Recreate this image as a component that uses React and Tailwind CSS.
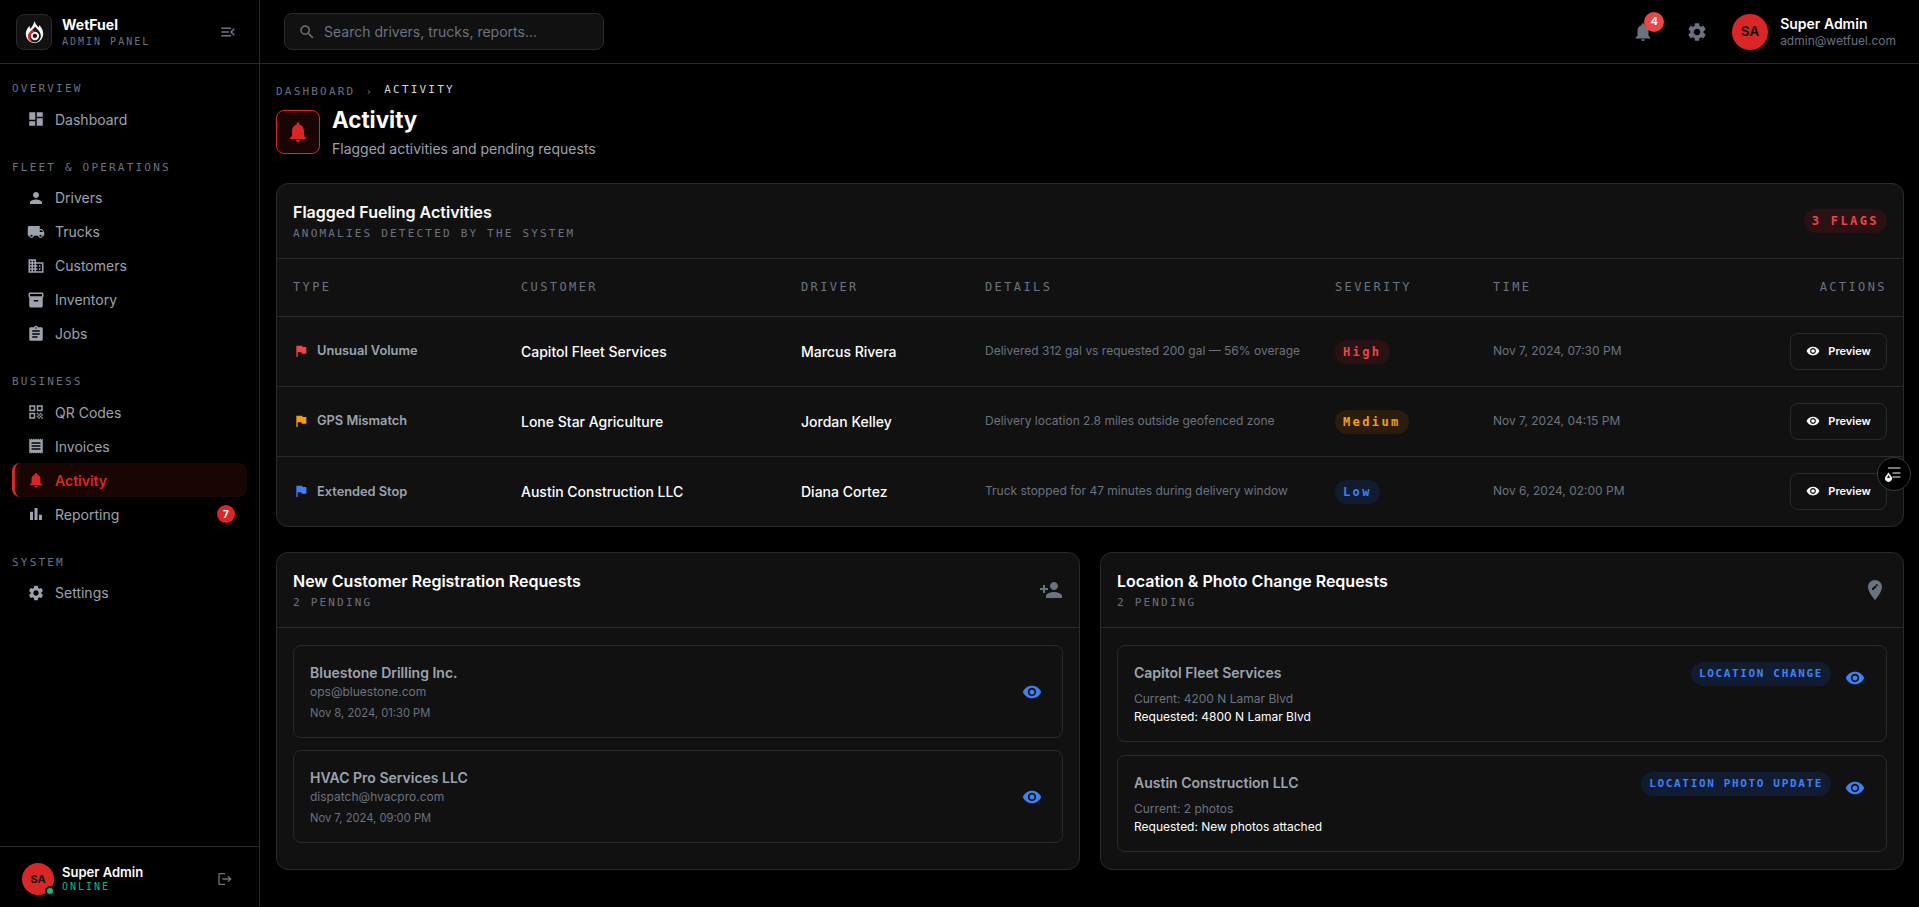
import React from 'react';
import {
  MdDashboard, MdPerson, MdLocalShipping, MdDomain, MdInventory2, MdAssignment, MdQrCode,
  MdReceipt, MdNotifications, MdBarChart, MdSettings, MdLogout, MdFlag, MdVisibility,
  MdPersonAdd, MdEditLocation, MdMenuOpen, MdSearch,
} from 'react-icons/md';

const mono = "font-['DejaVu_Sans_Mono',monospace]";

const navSections = [
  { label: 'OVERVIEW', items: [{ name: 'Dashboard', icon: MdDashboard }] },
  {
    label: 'FLEET & OPERATIONS',
    items: [
      { name: 'Drivers', icon: MdPerson },
      { name: 'Trucks', icon: MdLocalShipping },
      { name: 'Customers', icon: MdDomain },
      { name: 'Inventory', icon: MdInventory2 },
      { name: 'Jobs', icon: MdAssignment },
    ],
  },
  {
    label: 'BUSINESS',
    items: [
      { name: 'QR Codes', icon: MdQrCode },
      { name: 'Invoices', icon: MdReceipt },
      { name: 'Activity', icon: MdNotifications, active: true },
      { name: 'Reporting', icon: MdBarChart, badge: 7 },
    ],
  },
  { label: 'SYSTEM', items: [{ name: 'Settings', icon: MdSettings }] },
];

const flags = [
  {
    type: 'Unusual Volume', flag: 'text-[#ef4444]', customer: 'Capitol Fleet Services', driver: 'Marcus Rivera',
    details: 'Delivered 312 gal vs requested 200 gal — 56% overage', severity: 'High',
    pill: 'bg-[#2a1214] text-[#ef4444]', time: 'Nov 7, 2024, 07:30 PM',
  },
  {
    type: 'GPS Mismatch', flag: 'text-[#f59e0b]', customer: 'Lone Star Agriculture', driver: 'Jordan Kelley',
    details: 'Delivery location 2.8 miles outside geofenced zone', severity: 'Medium',
    pill: 'bg-[#2a1d0c] text-[#f59e0b]', time: 'Nov 7, 2024, 04:15 PM',
  },
  {
    type: 'Extended Stop', flag: 'text-[#3b82f6]', customer: 'Austin Construction LLC', driver: 'Diana Cortez',
    details: 'Truck stopped for 47 minutes during delivery window', severity: 'Low',
    pill: 'bg-[#111c30] text-[#3b82f6]', time: 'Nov 6, 2024, 02:00 PM',
  },
];

const registrations = [
  { name: 'Bluestone Drilling Inc.', email: 'ops@bluestone.com', date: 'Nov 8, 2024, 01:30 PM' },
  { name: 'HVAC Pro Services LLC', email: 'dispatch@hvacpro.com', date: 'Nov 7, 2024, 09:00 PM' },
];

const changes = [
  { name: 'Capitol Fleet Services', tag: 'LOCATION CHANGE', current: 'Current: 4200 N Lamar Blvd', requested: 'Requested: 4800 N Lamar Blvd' },
  { name: 'Austin Construction LLC', tag: 'LOCATION PHOTO UPDATE', current: 'Current: 2 photos', requested: 'Requested: New photos attached' },
];

const columns = ['TYPE', 'CUSTOMER', 'DRIVER', 'DETAILS', 'SEVERITY', 'TIME'];

function Logo() {
  return (
    <svg viewBox="0 0 24 30" className="h-[24px] w-[19px]">
      <path fill="#f3f4f6" d="M12 1c1 4 3 5 5 8 1-1 1-2 1-3 3 3 5 7 5 11 0 7-5 12-11 12S1 24 1 17c0-4 2-7 5-10 0 2 0 3 1 4 2-3 4-6 5-10z" />
      <path fill="#111111" d="M13 8c1 3 7 6 7 12a8 8 0 0 1-16 0c0-4 5-7 9-12z" />
      <circle cx="12.5" cy="20" r="4" fill="#111111" stroke="#f3f4f6" strokeWidth="2.6" />
      <path fill="#dc2626" d="M11 11C5 15 3 19 4 23c1 3 4 5 7 5-3-2-5-5-4-8 0-3 2-4 5-5-1-1-2-2-1-4z" />
    </svg>
  );
}

function Sidebar() {
  return (
    <aside className="flex h-full w-[260px] shrink-0 flex-col border-r border-[#2a2a2a] bg-black">
      <div className="flex h-[64px] shrink-0 items-center justify-between border-b border-[#2a2a2a] pl-4 pr-[22px]">
        <div className="flex items-center gap-2.5">
          <div className="flex h-9 w-9 items-center justify-center rounded-lg border border-[#2a2a2a] bg-[#111111]">
            <Logo />
          </div>
          <div>
            <div className="text-[14px] leading-[20px] font-bold text-white">WetFuel</div>
            <div className={`${mono} text-[10px] leading-[14px] tracking-[0.2em] text-[#6b7280]`}>ADMIN PANEL</div>
          </div>
        </div>
        <MdMenuOpen className="text-[#6b7280]" size={18} />
      </div>

      <nav className="flex-1 px-3 pt-[17px]">
        {navSections.map((section, i) => (
          <div key={section.label} className={i > 0 ? 'mt-[23.5px]' : ''}>
            <div className={`${mono} mb-[5px] text-[11px] leading-4 tracking-[0.2em] text-[#6b7280]`}>{section.label}</div>
            {section.items.map((item) => {
              const Icon = item.icon;
              return (
                <div
                  key={item.name}
                  className={
                    item.active
                      ? 'flex h-[34px] items-center gap-2.5 rounded-lg border-l-3 border-[#dc2626] bg-[#1a0505] px-3 text-[14px] font-semibold text-[#dc2626]'
                      : 'flex h-[34px] items-center gap-2.5 rounded-lg border-l-3 border-transparent px-3 text-[14px] text-[#9ca3af]'
                  }
                >
                  <Icon size={18} className="shrink-0" />
                  <span className="flex-1">{item.name}</span>
                  {item.badge && (
                    <span className="flex h-[18px] w-[18px] items-center justify-center rounded-full bg-[#dc2626] text-[10px] font-bold text-white">
                      {item.badge}
                    </span>
                  )}
                </div>
              );
            })}
          </div>
        ))}
      </nav>

      <div className="flex h-[61px] shrink-0 items-start justify-between border-t border-[#2a2a2a] pl-[22px] pr-[26px] pt-4">
        <div className="flex items-center gap-2">
          <div className="relative flex h-8 w-8 items-center justify-center rounded-full bg-[#dc2626] text-[11px] font-bold text-[#111111]">
            SA
            <span className="absolute -bottom-px -right-px h-2.5 w-2.5 rounded-full border-2 border-[#111111] bg-[#10b981]" />
          </div>
          <div>
            <div className="text-[13px] leading-4 font-semibold text-white">Super Admin</div>
            <div className={`${mono} text-[10px] leading-[14px] tracking-[0.2em] text-[#10b981]`}>ONLINE</div>
          </div>
        </div>
        <MdLogout className="mt-2 text-[#6b7280]" size={16} />
      </div>
    </aside>
  );
}

function Topbar() {
  return (
    <header className="flex h-[64px] shrink-0 items-center justify-between border-b border-[#2a2a2a] bg-black pl-6 pr-[23px]">
      <div className="flex h-[37px] w-[320px] items-center gap-2 rounded-lg border border-[#2a2a2a] bg-[#111111] px-[13px]">
        <MdSearch className="text-[#6b7280]" size={18} />
        <span className="text-[14px] text-[#6b7280]">Search drivers, trucks, reports...</span>
      </div>
      <div className="flex items-center">
        <div className="relative mr-8">
          <MdNotifications className="text-[#6b7280]" size={22} />
          <span className="absolute -right-[10px] -top-[9px] flex h-5 w-5 items-center justify-center rounded-full bg-[#ef4444] text-[11px] font-bold text-white">
            4
          </span>
        </div>
        <MdSettings className="mr-6 text-[#6b7280]" size={22} />
        <div className="flex h-9 w-9 items-center justify-center rounded-full bg-[#dc2626] text-[13px] font-bold text-[#111111]">SA</div>
        <div className="ml-3">
          <div className="text-[14px] leading-[18px] font-semibold text-white">Super Admin</div>
          <div className="text-[12px] leading-4 text-[#6b7280]">admin@wetfuel.com</div>
        </div>
      </div>
    </header>
  );
}

function CardHeader({ title, sub, right }) {
  return (
    <div className="flex items-center justify-between border-b border-[#2a2a2a] px-4 pb-4 pt-4">
      <div>
        <h2 className="text-[16px] leading-6 font-semibold text-white">{title}</h2>
        <p className={`${mono} mt-0.5 text-[11px] leading-4 tracking-[0.2em] text-[#6b7280]`}>{sub}</p>
      </div>
      {right}
    </div>
  );
}

function FlagTable() {
  return (
    <section className="overflow-hidden rounded-xl border border-[#2a2a2a] bg-[#111111]">
      <CardHeader
        title="Flagged Fueling Activities"
        sub="ANOMALIES DETECTED BY THE SYSTEM"
        right={
          <span className={`${mono} rounded-full bg-[#2a1214] px-2 py-1 text-[12px] leading-4 font-bold tracking-[0.2em] text-[#ef4444]`}>3 FLAGS</span>
        }
      />
      <table className="w-full table-fixed text-left">
        <colgroup>
          <col className="w-[228px]" />
          <col className="w-[280px]" />
          <col className="w-[184px]" />
          <col className="w-[350px]" />
          <col className="w-[158px]" />
          <col />
          <col className="w-[140px]" />
        </colgroup>
        <thead>
          <tr className="border-b border-[#2a2a2a]">
            {columns.map((c) => (
              <th key={c} className={`${mono} h-[57px] px-4 text-[12px] font-normal tracking-[0.2em] text-[#6b7280]`}>{c}</th>
            ))}
            <th className={`${mono} h-[57px] px-4 text-right text-[12px] font-normal tracking-[0.2em] text-[#6b7280]`}>ACTIONS</th>
          </tr>
        </thead>
        <tbody>
          {flags.map((f) => (
            <tr key={f.type} className="border-b border-[#2a2a2a] last:h-[70px] last:border-b-0">
              <td className="px-4">
                <div className="flex items-center gap-2 text-[12.8px] font-semibold text-[#9ca3af]">
                  <MdFlag className={f.flag} size={16} />
                  {f.type}
                </div>
              </td>
              <td className="px-4 text-[14px] font-medium text-white">{f.customer}</td>
              <td className="px-4 text-[14px] font-medium text-white">{f.driver}</td>
              <td className="px-4 text-[12px] whitespace-nowrap text-[#6b7280]">{f.details}</td>
              <td className="px-4">
                <span className={`${mono} ${f.pill} inline-block rounded-full px-2 py-1 text-[12px] leading-4 font-bold tracking-[0.2em]`}>{f.severity}</span>
              </td>
              <td className="px-4 text-[12px] whitespace-nowrap text-[#6b7280]">{f.time}</td>
              <td className="px-4 py-4">
                <div className="flex justify-end">
                  <button type="button" className="flex h-[37px] w-[97px] items-center justify-center gap-2 rounded-lg border border-[#2a2a2a] text-[11px] font-semibold text-white">
                    <MdVisibility size={14} />
                    Preview
                  </button>
                </div>
              </td>
            </tr>
          ))}
        </tbody>
      </table>
    </section>
  );
}

function Registrations() {
  return (
    <section className="rounded-xl border border-[#2a2a2a] bg-[#111111]">
      <CardHeader title="New Customer Registration Requests" sub="2 PENDING" right={<MdPersonAdd className="text-[#6b7280]" size={24} />} />
      <div className="flex flex-col gap-3 px-4 pt-[17px]">
        {registrations.map((r) => (
          <div key={r.name} className="flex h-[93px] items-center justify-between rounded-lg border border-[#2a2a2a] pl-4 pr-5">
            <div>
              <div className="text-[14px] leading-5 font-semibold text-[#9ca3af]">{r.name}</div>
              <div className="text-[12px] leading-[18px] text-[#6b7280]">{r.email}</div>
              <div className="mt-1 text-[11.2px] leading-4 text-[#6b7280]">{r.date}</div>
            </div>
            <MdVisibility className="text-[#3b82f6]" size={20} />
          </div>
        ))}
      </div>
    </section>
  );
}

function Changes() {
  return (
    <section className="rounded-xl border border-[#2a2a2a] bg-[#111111]">
      <CardHeader title="Location & Photo Change Requests" sub="2 PENDING" right={<MdEditLocation className="text-[#6b7280]" size={24} />} />
      <div className="flex flex-col gap-[13px] px-4 pb-[17px] pt-[17px]">
        {changes.map((c) => (
          <div key={c.name} className="h-[97px] rounded-lg border border-[#2a2a2a] pl-4 pr-[21px] pt-4">
            <div className="flex items-start justify-between">
              <div className="mt-px text-[14px] leading-5 font-semibold text-[#9ca3af]">{c.name}</div>
              <div className="flex items-start gap-3.5">
                <span className={`${mono} rounded-full bg-[#111c30] px-2 py-1 text-[11px] leading-4 font-bold tracking-[0.15em] text-[#3b82f6]`}>{c.tag}</span>
                <MdVisibility className="mt-1.5 text-[#3b82f6]" size={20} />
              </div>
            </div>
            <div className="mt-0.5 text-[12px] leading-[18px] text-[#6b7280]">{c.current}</div>
            <div className="text-[12px] leading-[18px] text-white">{c.requested}</div>
          </div>
        ))}
      </div>
    </section>
  );
}

export default function App() {
  return (
    <div className="relative flex h-[907px] overflow-hidden bg-black font-['Inter',sans-serif]">
      <Sidebar />
      <div className="flex min-w-0 flex-1 flex-col">
        <Topbar />
        <main className="flex-1 pl-4 pr-[15px] pt-[18px]">
          <div className={`${mono} flex items-start text-[11px] leading-4 tracking-[0.2em]`}>
            <span className="mt-0.5 text-[#6b7280]">DASHBOARD</span>
            <span className="mx-2.5 mt-0.5 text-[#6b7280]">›</span>
            <span className="text-[#d1d5db]">ACTIVITY</span>
          </div>
          <div className="mb-6 mt-1 flex items-center gap-3">
            <div className="flex h-11 w-11 items-center justify-center rounded-lg border border-[#dc2626] bg-[#1a0505]">
              <MdNotifications className="text-[#dc2626]" size={24} />
            </div>
            <div>
              <h1 className="text-[22.4px] leading-8 font-bold text-white">Activity</h1>
              <p className="mt-[3px] text-[14px] leading-5 text-[#9ca3af]">Flagged activities and pending requests</p>
            </div>
          </div>
          <FlagTable />
          <div className="mt-[25px] grid grid-cols-2 gap-5">
            <Registrations />
            <Changes />
          </div>
        </main>
      </div>
      <div className="absolute left-[1877px] top-[457px] flex h-[34px] w-[34px] items-center justify-center rounded-full border border-[#3a3a3a] bg-black">
        <svg viewBox="-9 -9 18 18" className="h-[18px] w-[18px]" fill="none" stroke="#f3f4f6" strokeWidth="1.2" strokeLinecap="round">
          <path d="M-5.5-6H6M-1-1H6M-1 3H6" />
          <path fill="#f3f4f6" stroke="none" d="M-5.5-1.5-2.6 2.5A3.5 3.5 0 1 1-8.4 2.5z" />
          <path fill="#111111" stroke="none" d="M-5.5 1-4 4H-7z" />
        </svg>
      </div>
    </div>
  );
}
